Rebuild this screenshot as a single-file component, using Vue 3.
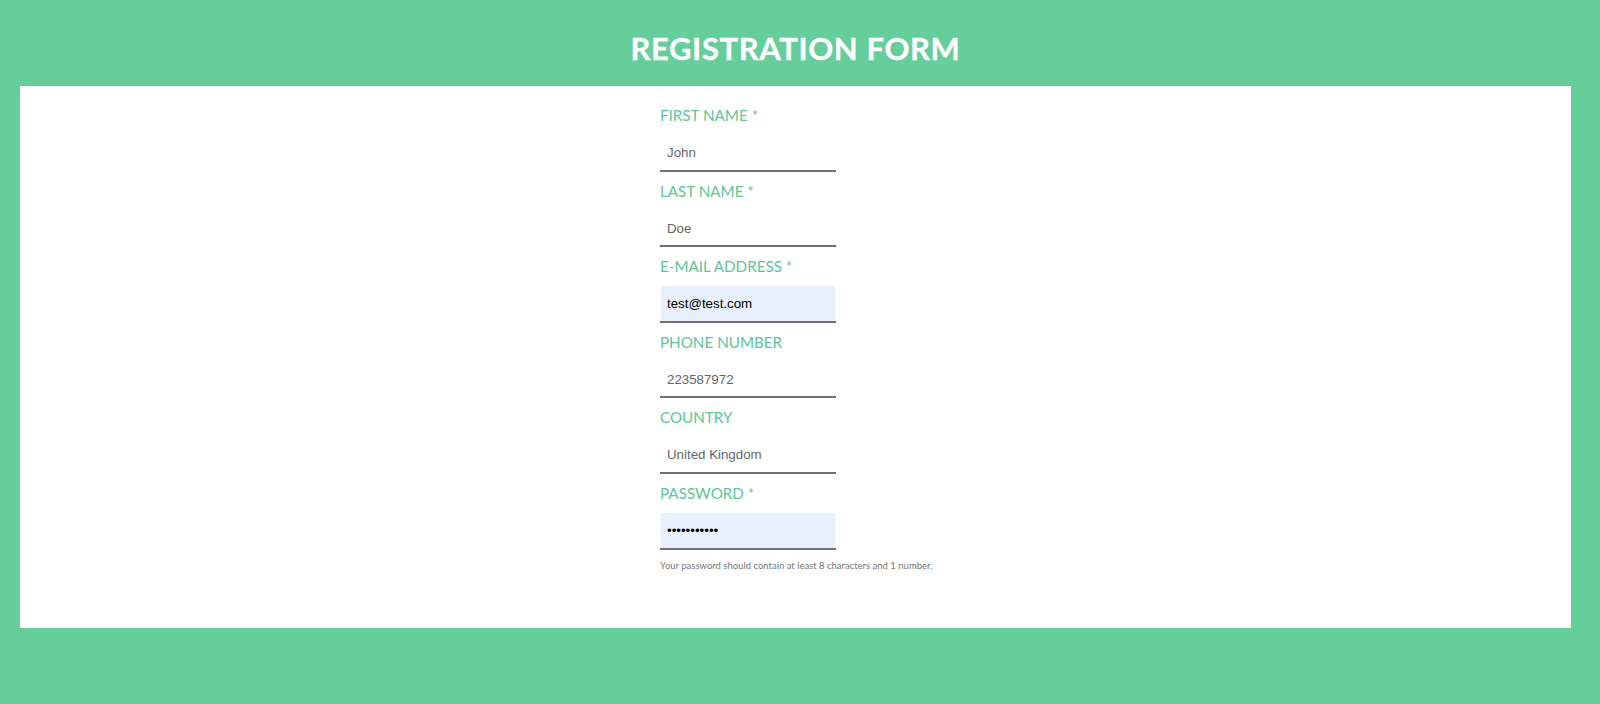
<script setup>
const fields = [
  { label: 'FIRST NAME *', value: 'John', type: 'text', filled: false },
  { label: 'LAST NAME *', value: 'Doe', type: 'text', filled: false },
  { label: 'E-MAIL ADDRESS *', value: 'test@test.com', type: 'text', filled: true },
  { label: 'PHONE NUMBER', value: '223587972', type: 'text', filled: false },
  { label: 'COUNTRY', value: 'United Kingdom', type: 'text', filled: false },
  { label: 'PASSWORD *', value: 'password123', type: 'password', filled: true }
]
</script>

<template>
  <div class="page">
    <header class="head"><h1>REGISTRATION FORM</h1></header>
    <main class="card">
      <form class="form">
        <div v-for="f in fields" :key="f.label" class="field">
          <label class="label">{{ f.label }}</label>
          <input class="input" :class="{ filled: f.filled }" :type="f.type" :value="f.value" readonly />
        </div>
        <p class="hint">Your password should contain at least 8 characters and 1 number.</p>
      </form>
    </main>
  </div>
</template>

<style scoped>
.page {
  height: 704px;
  background: #66ce9b;
  font-family: Lato, "Liberation Sans", sans-serif;
  overflow: hidden;
}
.head {
  height: 86px;
  display: flex;
  align-items: center;
  justify-content: center;
  padding: 10px 9px 0 0;
  box-sizing: border-box;
}
h1 {
  margin: 0;
  color: #fff;
  font-size: 31px;
  font-weight: 700;
  line-height: 36px;
  letter-spacing: 0.6px;
  -webkit-text-stroke: 0.3px #fff;
}
.card {
  height: 542px;
  margin: 0 29px 0 20px;
  background: #fff;
  padding: 10px 0 0 640px;
  box-sizing: border-box;
}
.form { width: 300px; }
.field {
  display: flex;
  flex-direction: column;
  width: 176px;
  height: 75.6px;
}
.label {
  box-sizing: border-box;
  color: #5dc596;
  font-size: 15.2px;
  line-height: 20px;
  height: 38.6px;
  padding-top: 9px;
  white-space: nowrap;
}
.input {
  display: block;
  width: 176px;
  height: 37px;
  margin: 0;
  padding: 1px 6px 0 7px;
  border: 0;
  border-bottom: 2px solid #707074;
  background: #fff;
  background-clip: padding-box;
  box-sizing: border-box;
  color: #666;
  font-family: "Liberation Sans", Arial, sans-serif;
  font-size: 13.3px;
  outline: 0;
  border-radius: 0;
}
.input.filled {
  background: linear-gradient(#e8f0fe, #e8f0fe) no-repeat 1px 0 / 174px 100%;
  color: #000;
}
.hint {
  margin: 9px 0 0;
  color: #777;
  font-size: 9.5px;
  line-height: 14px;
  white-space: nowrap;
}
</style>
